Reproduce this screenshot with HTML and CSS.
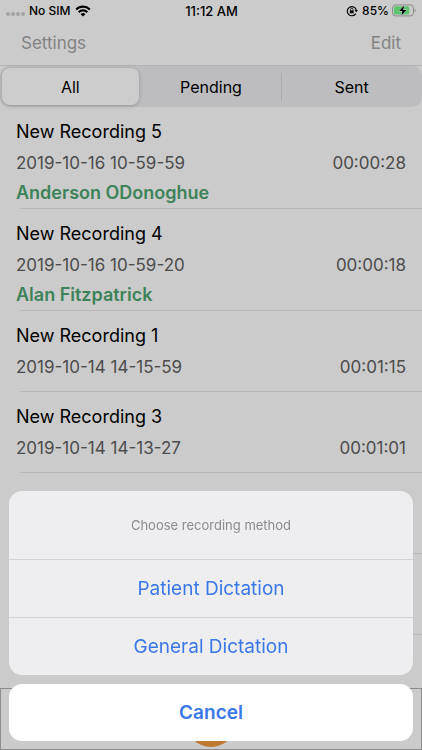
FILE: index.html
```html
<!DOCTYPE html>
<html lang="en">
<head>
<meta charset="utf-8">
<meta name="viewport" content="width=device-width, initial-scale=1">
<title>Recordings</title>
<link rel="stylesheet" href="styles.css">
</head>
<body>
<div class="app">
  <div class="status">
    <div class="status-left">
      <span class="dots"><i></i><i></i><i></i><i></i></span>
      <span>No SIM</span>
      <svg class="wifi" width="16" height="12" viewBox="0 0 16 12" aria-hidden="true">
        <path d="M1.200 4.500a9.700 9.700 0 0 1 13.600 0M3.700 7.200a6.200 6.200 0 0 1 8.600 0" fill="none" stroke="#000" stroke-width="2.200"/>
        <path d="M8 11.600 5.600 9.200a3.400 3.400 0 0 1 4.800 0z"/>
      </svg>
    </div>
    <span class="clock">11:12 AM</span>
    <div class="status-right">
      <svg width="12" height="12" viewBox="0 0 12 12" aria-hidden="true">
        <path d="M9.8 8.6A4.6 4.6 0 1 1 10.3 5" fill="none" stroke="#000" stroke-width="1.1"/>
        <path d="M8.5 4.9h3.4l-1.6 2.3z"/>
        <path d="M3.8 5.4h3.9v2.9H3.8z"/>
        <path d="M4.6 5.5V4.3a1.15 1.15 0 0 1 2.3 0v1.2" fill="none" stroke="#000" stroke-width=".8"/>
      </svg>
      <span>85%</span>
      <svg class="battery" width="26" height="13" viewBox="0 0 26 13" aria-hidden="true">
        <rect x="1.500" y=".9" width="21" height="11" rx="3" fill="none" stroke="#8c8c8c" stroke-width="1"/>
        <rect x="2.800" y="2.300" width="15.500" height="8.200" rx="1.600" fill="#5cc46c"/>
        <path d="M23.600 4.600v3.600c1.500-.5 1.500-3.100 0-3.600z" fill="#8c8c8c"/>
        <path d="M13 1.600 8.200 7.100h3.100l-.8 4.300 4.900-5.500h-3.200z" stroke="#cbcbcb" stroke-width="1" paint-order="stroke"/>
      </svg>
    </div>
  </div>
  <nav class="nav">
    <button type="button">Settings</button>
    <button type="button">Edit</button>
  </nav>
  <div class="segments">
    <button type="button" class="selected" aria-pressed="true">All</button>
    <button type="button" aria-pressed="false">Pending</button>
    <button type="button" class="divided" aria-pressed="false">Sent</button>
  </div>
  <ul class="list">
    <li><h2>New Recording 5</h2><p class="meta"><span>2019-10-16 10-59-59</span><span>00:00:28</span></p><p class="name">Anderson ODonoghue</p></li>
    <li><h2>New Recording 4</h2><p class="meta"><span>2019-10-16 10-59-20</span><span>00:00:18</span></p><p class="name">Alan Fitzpatrick</p></li>
    <li><h2>New Recording 1</h2><p class="meta"><span>2019-10-14 14-15-59</span><span>00:01:15</span></p></li>
    <li><h2>New Recording 3</h2><p class="meta"><span>2019-10-14 14-13-27</span><span>00:01:01</span></p></li>
    <li></li>
    <li></li>
  </ul>
  <footer class="toolbar"><button type="button" class="record" aria-label="Record"></button></footer>
</div>
<div class="sheet" role="dialog" aria-labelledby="sheet-title">
  <div class="options">
    <p id="sheet-title">Choose recording method</p>
    <button type="button">Patient Dictation</button>
    <button type="button">General Dictation</button>
  </div>
  <button type="button" class="cancel">Cancel</button>
</div>
</body>
</html>
```

FILE: styles.css
```css
* {
  box-sizing: border-box;
  margin: 0;
  padding: 0;
}

body {
  background: #cbcbcb;
  color: #000;
  font-family: Inter, "Liberation Sans", sans-serif;
}

button {
  border: 0;
  background: none;
  color: inherit;
  font: inherit;
}

.app {
  display: flex;
  flex-direction: column;
  height: 100vh;
  overflow: hidden;
}

.status {
  display: grid;
  grid-template-columns: 1fr auto 1fr;
  align-items: center;
  height: 21px;
  padding: 0 5px 0 6px;
  font-size: 12px;
  font-weight: 500;
}

.clock {
  font-size: 13px;
}

.status-left,
.status-right {
  display: flex;
  align-items: center;
  gap: 4px;
}

.status-right {
  justify-content: flex-end;
}

.battery {
  margin-left: -2px;
}

.dots {
  display: flex;
  gap: 1px;
  padding-top: 7px;
}

.dots i {
  width: 4px;
  height: 4px;
  border-radius: 50%;
  background: #a2a2a2;
}

.nav {
  display: flex;
  justify-content: space-between;
  align-items: center;
  height: 45px;
  padding: 0 21px;
  border-bottom: 1px solid #b3b3b4;
  color: #838383;
  font-size: 17px;
}

.segments {
  display: grid;
  grid-template-columns: repeat(3, 1fr);
  height: 41px;
  padding: 2px 0;
  border-radius: 10px;
  background: #bdbdc0;
  font-size: 16px;
}

.segments .selected {
  margin: 0 2px;
  border-radius: 8px;
  background: #cdcdcd;
  box-shadow: 0 1px 4px rgba(0, 0, 0, 0.2);
}

.segments .divided {
  background: linear-gradient(#aaaaad, #aaaaad) left center / 1px 28px no-repeat;
}

.list {
  flex: 1;
  min-height: 0;
  overflow: hidden;
  list-style: none;
}

.list li {
  display: flex;
  flex-direction: column;
  min-height: 81px;
  padding: 13px 16px 0;
}

.list li::after {
  content: "";
  height: 1px;
  margin: auto -16px 0 4px;
  background: #b9b9bb;
}

.list h2 {
  font-size: 18px;
  font-weight: 400;
  line-height: 24px;
}

.meta {
  display: flex;
  justify-content: space-between;
  margin-top: 7px;
  color: #4c4c4c;
  font-size: 17px;
  line-height: 24px;
}

.name {
  margin: 6px 0 3px;
  color: #3d835a;
  font-size: 18px;
  font-weight: 600;
  line-height: 24px;
}

.toolbar {
  display: flex;
  justify-content: center;
  align-items: flex-end;
  height: 62px;
  padding-bottom: 2px;
  border: 1px solid #8d8d8d;
}

.record {
  width: 50px;
  height: 50px;
  border-radius: 50%;
  background: #bf7b31;
}

.sheet {
  position: fixed;
  right: 9px;
  bottom: 9px;
  left: 9px;
  display: grid;
  gap: 9px;
  color: #3b78e7;
  font-size: 19px;
  text-align: center;
}

.options {
  overflow: hidden;
  border-radius: 13px;
  background: #eeeef0;
}

.options p {
  color: #8b8b8d;
  font-size: 13px;
  line-height: 68px;
}

.options button {
  display: block;
  width: 100%;
  height: 58px;
  border-top: 1px solid #d3d3d5;
}

.cancel {
  height: 57px;
  border-radius: 13px;
  background: #fff;
  font-weight: 600;
}
```
